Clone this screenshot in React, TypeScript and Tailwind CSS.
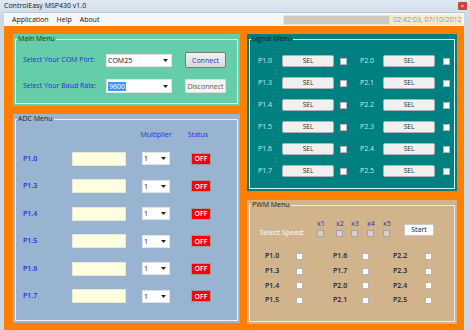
import React from "react";

const font = "font-['Open_Sans','Noto_Sans',sans-serif]";

function GroupBox({
  title,
  bg,
  line,
  labelCls,
  className,
  children,
}: {
  title: string;
  bg: string;
  line: string;
  labelCls: string;
  className: string;
  children: React.ReactNode;
}) {
  return (
    <div className={`${bg} ${className} flex flex-col px-[2px] pb-[2px] pt-[5px]`}>
      <div className={`relative flex-1 border ${line}`}>
        <span className={`absolute -top-[6px] left-[1px] px-[1px] text-[7px] leading-[10px] ${bg} ${labelCls}`}>
          {title}
        </span>
        {children}
      </div>
    </div>
  );
}

function Arrow() {
  return (
    <svg width="5" height="3" viewBox="0 0 5 3">
      <path d="M0 0h5L2.5 3z" fill="#222" />
    </svg>
  );
}

function Combo({ w, h, text, selected }: { w: string; h: string; text: string; selected?: boolean }) {
  return (
    <div className={`${w} ${h} flex items-center justify-between border border-[#e2e2e2] bg-white pl-[1px] pr-[3px]`}>
      <span className={`text-[7px] leading-[9px] ${selected ? "bg-[#3399ff] px-[1px] text-white" : "text-[#111]"}`}>
        {text}
      </span>
      <Arrow />
    </div>
  );
}

function Check({ gray }: { gray?: boolean }) {
  return (
    <span
      className={`block h-[7px] w-[7px] border ${
        gray ? "border-[#a4a4a4] bg-[#d2d2d2]" : "border-[#b4b4b4] bg-white"
      }`}
    />
  );
}

const adcRows = ["P1.0", "P1.3", "P1.4", "P1.5", "P1.6", "P1.7"];
const sigRows = [
  ["P1.0", "P2.0"],
  ["P1.3", "P2.1"],
  ["P1.4", "P2.2"],
  ["P1.5", "P2.3"],
  ["P1.6", "P2.4"],
  ["P1.7", "P2.5"],
];
const pwmCols = [
  ["P1.0", "P1.3", "P1.4", "P1.5"],
  ["P1.6", "P1.7", "P2.0", "P2.1"],
  ["P2.2", "P2.3", "P2.4", "P2.5"],
];
const speeds = [
  { l: "x1", w: "w-[19px]" },
  { l: "x2", w: "w-[15px]" },
  { l: "x3", w: "w-[16px]" },
  { l: "x4", w: "w-[16px]" },
  { l: "x5", w: "w-[16px]" },
];

export default function App() {
  return (
    <div className={`${font} flex h-[330px] w-[470px] flex-col overflow-hidden bg-[#cbd8e6]`}>
      {/* title bar */}
      <div className="flex h-[12px] items-center justify-between bg-gradient-to-b from-[#dfe8f2] to-[#d3dfec] pl-[4px] pr-[3px]">
        <span className="text-[7px] leading-[10px] text-[#111]">ControlEasy MSP430 v1.0</span>
        <span className="flex h-[8px] w-[9px] items-center justify-center rounded-[1px] bg-[#c9463d] text-[6px] leading-none text-white">
          ×
        </span>
      </div>

      <div className="flex flex-1 flex-col pl-[4px] pr-[6px]">
        {/* menu bar */}
        <div className="flex h-[14px] items-center border-t border-[#b9c6d4] bg-[#f5f6f8]">
          <div className="flex gap-[8px] pl-[8px] text-[7px] leading-[10px] text-[#111]">
            <span>Application</span>
            <span>Help</span>
            <span>About</span>
          </div>
          <div className="ml-auto mr-[2px] flex h-[10px] items-stretch">
            <div className="w-[107px] border border-[#e6e2dc] bg-[#cdc8c0]" />
            <div className="flex w-[72px] items-center whitespace-nowrap bg-[#fbe8c9] pl-[3px] text-[7px] leading-[10px] text-[#6a9fe4]">
              02:42:03, 07/10/2012
            </div>
          </div>
        </div>

        {/* body */}
        <div className="flex flex-1 gap-[7px] bg-[#ff8000] pl-[9px] pr-[7px] pt-[8px]">
          {/* left column */}
          <div className="flex w-[227px] flex-col gap-[8px]">
            <GroupBox
              title="Main Menu"
              bg="bg-[#66cdaa]"
              line="border-[#eef6f2]"
              labelCls="text-[#1c2a24]"
              className="h-[72px]"
            >
              <div className="grid grid-cols-[70px_66px_41px] items-center gap-x-[13px] gap-y-[11px] pl-[7px] pt-[12px]">
                <span className="whitespace-nowrap text-[7px] leading-[10px] text-[#2a2ae0]">Select Your COM Port:</span>
                <Combo w="w-[66px]" h="h-[13px]" text="COM25" />
                <button className="flex h-[16px] items-center justify-center rounded-[2px] border border-[#7a7a7a] bg-gradient-to-b from-[#f2f2f2] to-[#d9d9d9] text-[7px] leading-none text-[#2b2bb8]">
                  Connect
                </button>
                <span className="whitespace-nowrap text-[7px] leading-[10px] text-[#2a2ae0]">Select Your Baud Rate:</span>
                <Combo w="w-[66px]" h="h-[14px]" text="9600" selected />
                <button className="flex h-[14px] items-center justify-center rounded-[1px] border border-[#dcdcdc] bg-[#f4f4f4] text-[7px] leading-none text-[#5a5a5a]">
                  Disconnect
                </button>
              </div>
            </GroupBox>

            <GroupBox
              title="ADC Menu"
              bg="bg-[#99b4d1]"
              line="border-[#eef2f7]"
              labelCls="text-[#1c2430]"
              className="h-[209px]"
            >
              <div className="pl-[7px] pt-[8px]">
                <div className="grid h-[14px] grid-cols-[33px_54px_28px_20px] items-center gap-x-[16px] text-[7px] leading-[10px] text-[#2a2ae0]">
                  <span />
                  <span />
                  <span className="flex justify-center whitespace-nowrap">Multiplier</span>
                  <span className="ml-[4px] flex justify-center">Status</span>
                </div>
                <div className="mt-[3px] flex flex-col">
                  {adcRows.map((p) => (
                    <div
                      key={p}
                      className="grid h-[27.5px] grid-cols-[33px_54px_28px_20px] items-center gap-x-[16px]"
                    >
                      <span className="text-[7px] font-semibold leading-[10px] text-[#2a2ae0]">{p}</span>
                      <span className="h-[14px] border border-[#e8e8d8] bg-[#ffffe0]" />
                      <Combo w="w-[28px]" h="h-[13px]" text="1" />
                      <span className="ml-[5px] flex h-[12px] w-[20px] items-center justify-center border border-[#9a9a9a] bg-[#ff0000] text-[7px] font-semibold leading-none text-white">
                        OFF
                      </span>
                    </div>
                  ))}
                </div>
              </div>
            </GroupBox>
          </div>

          {/* right column */}
          <div className="flex w-[210px] flex-col gap-[9px]">
            <GroupBox
              title="Signal Menu"
              bg="bg-[#008080]"
              line="border-[#e6efef]"
              labelCls="text-[#0e1e1e]"
              className="h-[157px]"
            >
              <div className="flex flex-col pl-[8px] pt-[10px]">
                {sigRows.map(([a, b]) => (
                  <div key={a} className="flex h-[22px] items-center">
                    {[a, b].map((p, i) => (
                      <div key={p} className={`flex items-center ${i === 0 ? "w-[102px]" : ""}`}>
                        <span className={`text-[7px] leading-[10px] text-[#d6e4e4] ${i === 0 ? "w-[24px]" : "w-[23px]"}`}>
                          {p}
                        </span>
                        <button className="flex h-[12px] w-[52px] items-center justify-center rounded-[2px] border border-[#b0b0b0] bg-[#f0f0f0] text-[6.5px] leading-none text-[#222]">
                          SEL
                        </button>
                        <span className={i === 0 ? "ml-[6px]" : "ml-[8px]"}>
                          <Check />
                        </span>
                      </div>
                    ))}
                  </div>
                ))}
              </div>
            </GroupBox>

            <GroupBox
              title="PWM Menu"
              bg="bg-[#d2b48c]"
              line="border-[#f2ebe0]"
              labelCls="text-[#221a10]"
              className="h-[124px]"
            >
              <div className="pl-[10px] pt-[12px]">
                <div className="flex items-center">
                  <span className="mt-[10px] w-[57px] whitespace-nowrap text-[7px] font-semibold leading-[10px] text-[#f6f1ea]">
                    Select Speed:
                  </span>
                  {speeds.map((s) => (
                    <div key={s.l} className={`flex ${s.w} flex-col items-start`}>
                      <span className="text-[7px] leading-[10px] text-[#2424d8]">{s.l}</span>
                      <span className="mt-[1px]">
                        <Check gray />
                      </span>
                    </div>
                  ))}
                  <button className="ml-[5px] mt-[3px] flex h-[12px] w-[30px] items-center justify-center border border-[#c8c8c8] bg-white text-[7px] leading-none text-[#111]">
                    Start
                  </button>
                </div>
                <div className="mt-[11px] flex pl-[5px]">
                  {pwmCols.map((col, ci) => (
                    <div key={ci} className={`flex flex-col ${ci === 2 ? "" : ci === 0 ? "w-[68px]" : "w-[60px]"}`}>
                      {col.map((p) => (
                        <div key={p} className="flex h-[14.7px] items-center">
                          <span
                            className={`text-[7px] font-semibold leading-[10px] text-[#1e1e1e] ${
                              ci === 0 ? "w-[31px]" : ci === 1 ? "w-[29px]" : "w-[32px]"
                            }`}
                          >
                            {p}
                          </span>
                          <Check />
                        </div>
                      ))}
                    </div>
                  ))}
                </div>
              </div>
            </GroupBox>
          </div>
        </div>
      </div>
    </div>
  );
}
